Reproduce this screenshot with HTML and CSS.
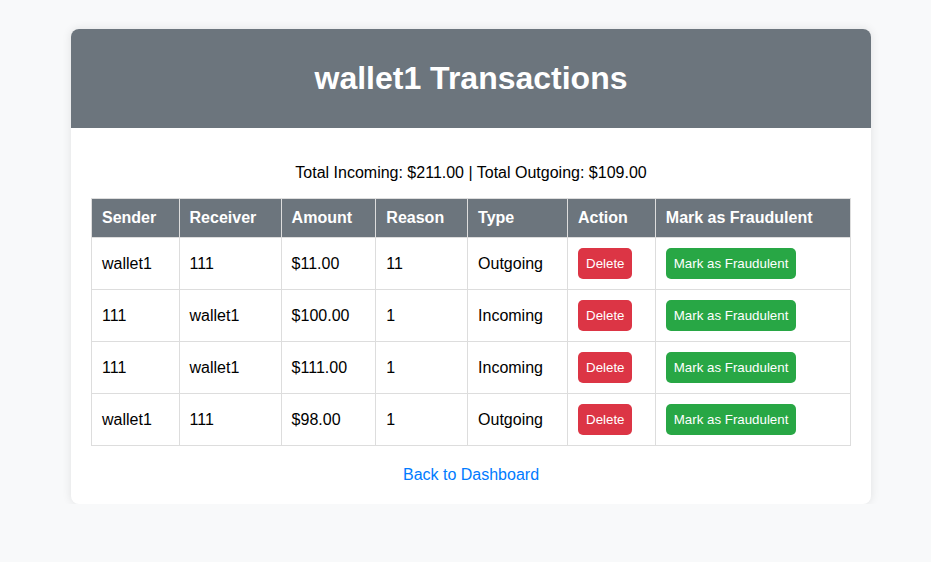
FILE: index.html
```html
<!DOCTYPE html>
<html>
<head>
<meta charset="utf-8">
<title>wallet1 Transactions</title>
<link rel="stylesheet" href="styles.css">
</head>
<body>
<div class="card">
  <div class="card-header">
    <h1 class="title">wallet1 Transactions</h1>
  </div>
  <div class="card-body">
    <p class="totals">Total Incoming: $211.00 | Total Outgoing: $109.00</p>
    <table class="tx-table">
      <thead>
        <tr>
          <th>Sender</th><th>Receiver</th><th>Amount</th><th>Reason</th><th>Type</th><th>Action</th><th>Mark as Fraudulent</th>
        </tr>
      </thead>
      <tbody>
        <tr>
          <td>wallet1</td><td>111</td><td>$11.00</td><td>11</td><td>Outgoing</td>
          <td><button class="btn btn-delete">Delete</button></td>
          <td><button class="btn btn-fraud">Mark as Fraudulent</button></td>
        </tr>
        <tr>
          <td>111</td><td>wallet1</td><td>$100.00</td><td>1</td><td>Incoming</td>
          <td><button class="btn btn-delete">Delete</button></td>
          <td><button class="btn btn-fraud">Mark as Fraudulent</button></td>
        </tr>
        <tr>
          <td>111</td><td>wallet1</td><td>$111.00</td><td>1</td><td>Incoming</td>
          <td><button class="btn btn-delete">Delete</button></td>
          <td><button class="btn btn-fraud">Mark as Fraudulent</button></td>
        </tr>
        <tr>
          <td>wallet1</td><td>111</td><td>$98.00</td><td>1</td><td>Outgoing</td>
          <td><button class="btn btn-delete">Delete</button></td>
          <td><button class="btn btn-fraud">Mark as Fraudulent</button></td>
        </tr>
      </tbody>
    </table>
    <div class="back">
      <a class="back-link" href="#">Back to Dashboard</a>
    </div>
  </div>
</div>
</body>
</html>
```
FILE: styles.css
```css
* { box-sizing: border-box; }
html, body { margin: 0; padding: 0; }
body {
  background: #f8f9fa;
  font-family: "Liberation Sans", Arial, sans-serif;
  color: #000;
  padding: 29px 0 0 11px;
}
.card {
  width: 800px;
  margin: 0 auto;
  background: #fff;
  border-radius: 8px;
  box-shadow: 0 0 10px rgba(0, 0, 0, 0.1);
  overflow: hidden;
}
.card-header {
  background: #6c757d;
  height: 99px;
  display: flex;
  align-items: center;
  justify-content: center;
}
.title {
  margin: 0;
  color: #fff;
  font-size: 32px;
  font-weight: bold;
  line-height: 37px;
}
.card-body {
  padding: 20px;
}
.totals {
  margin: 16px 0;
  text-align: center;
  font-size: 16px;
  line-height: 18px;
}
.tx-table {
  width: 100%;
  border-collapse: collapse;
  font-size: 16px;
}
.tx-table th, .tx-table td {
  border: 1px solid #ddd;
  padding: 10px;
  text-align: left;
  line-height: 18px;
}
.tx-table th {
  background: #6c757d;
  color: #fff;
  font-weight: bold;
}
.btn {
  border: none;
  border-radius: 5px;
  padding: 8px;
  font-family: "Liberation Sans", Arial, sans-serif;
  font-size: 13.3px;
  line-height: 15px;
  color: #fff;
  cursor: pointer;
  display: block;
}
.btn-delete { background: #dc3545; }
.btn-fraud { background: #28a745; }
.back {
  margin-top: 20px;
  text-align: center;
  line-height: 18px;
}
.back-link {
  color: #007bff;
  text-decoration: none;
  font-size: 16px;
}
```
